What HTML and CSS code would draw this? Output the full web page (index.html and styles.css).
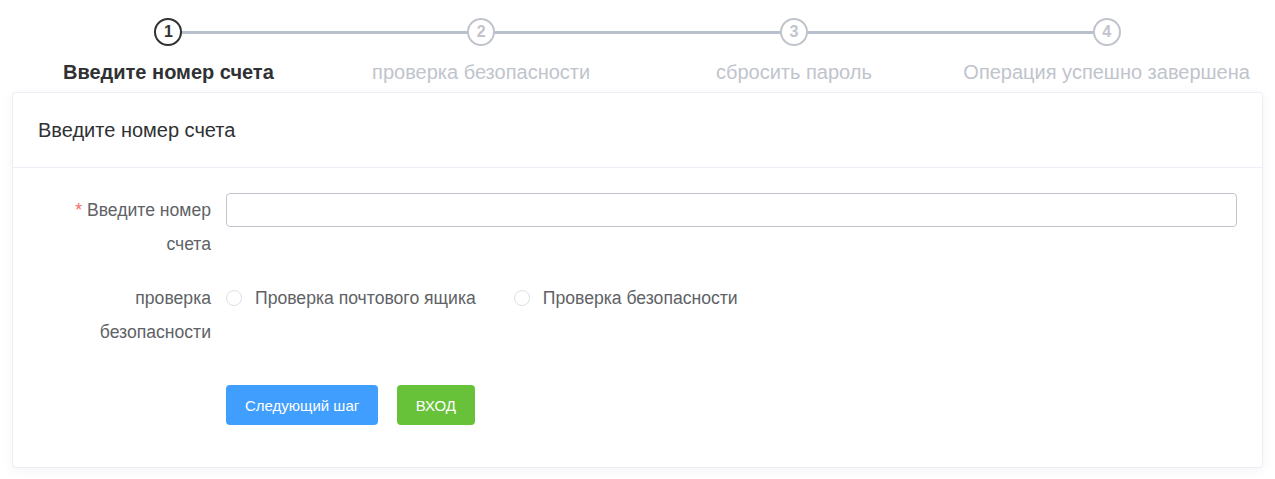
FILE: index.html
```html
<html lang="ru">
<head>
    <meta charset="UTF-8">
    <meta name="viewport" content="width=device-width, initial-scale=1.0">
    <title>Восстановление пароля</title>
    <link rel="stylesheet" href="styles.css">
</head>
<body>
    <div class="steps">
        <div class="step active">
            <div class="step-head">
                <div class="step-line"></div>
                <div class="step-icon">1</div>
            </div>
            <div class="step-title">Введите номер счета</div>
        </div>
        <div class="step">
            <div class="step-head">
                <div class="step-line"></div>
                <div class="step-icon">2</div>
            </div>
            <div class="step-title">проверка безопасности</div>
        </div>
        <div class="step">
            <div class="step-head">
                <div class="step-line"></div>
                <div class="step-icon">3</div>
            </div>
            <div class="step-title">сбросить пароль</div>
        </div>
        <div class="step last">
            <div class="step-head">
                <div class="step-icon">4</div>
            </div>
            <div class="step-title">Операция успешно завершена</div>
        </div>
    </div>

    <div class="card">
        <div class="card-header">Введите номер счета</div>
        <div class="card-body">
            <div class="form-item">
                <label class="form-label"><span class="required">*</span> Введите номер счета</label>
                <div class="form-content">
                    <input type="text" class="form-input">
                </div>
            </div>
            <div class="form-item">
                <label class="form-label">проверка безопасности</label>
                <div class="form-content radios">
                    <label class="radio"><span class="radio-dot"></span>Проверка почтового ящика</label>
                    <label class="radio"><span class="radio-dot"></span>Проверка безопасности</label>
                </div>
            </div>
            <div class="form-item buttons">
                <div class="form-label"></div>
                <div class="form-content">
                    <button class="btn btn-primary">Следующий шаг</button>
                    <button class="btn btn-success">ВХОД</button>
                </div>
            </div>
        </div>
    </div>
</body>
</html>
```

FILE: styles.css
```css
body {
    margin: 0;
    padding: 0 12px;
    font-family: "Liberation Sans", Arial, sans-serif;
    background-color: #ffffff;
    color: #606266;
}

/* шаги */
.steps {
    display: flex;
    padding-top: 18px;
}

.step {
    flex: 1;
    text-align: center;
}

.step-head {
    position: relative;
    height: 28px;
}

.step-line {
    position: absolute;
    top: 13px;
    left: 50%;
    right: -50%;
    height: 3px;
    background-color: #b9c0cd;
}

.step-icon {
    position: relative;
    width: 24px;
    height: 24px;
    margin: 0 auto;
    border: 2px solid #c0c4cc;
    border-radius: 50%;
    background-color: #ffffff;
    color: #c0c4cc;
    font-size: 16px;
    font-weight: bold;
    line-height: 24px;
}

.step-title {
    margin-top: 8px;
    line-height: 36px;
    font-size: 20px;
    color: #c0c4cc;
}

.step.active .step-icon {
    border-color: #303133;
    color: #303133;
}

.step.active .step-title {
    color: #303133;
    font-weight: bold;
}

/* карточка */
.card {
    margin-top: 2px;
    border: 1px solid #ebeef5;
    border-radius: 4px;
    background-color: #ffffff;
    box-shadow: 0 2px 12px 0 rgba(0, 0, 0, 0.05);
}

.card-header {
    padding: 0 25px;
    line-height: 74px;
    font-size: 20px;
    color: #303133;
    border-bottom: 1px solid #ebeef5;
}

.card-body {
    padding: 25px 25px 42px 0;
}

.form-item {
    display: flex;
    margin-bottom: 20px;
}

.form-item.buttons {
    margin-top: 36px;
    margin-bottom: 0;
}

.form-label {
    flex: 0 0 213px;
    box-sizing: border-box;
    padding: 0 15px 0 50px;
    text-align: right;
    font-size: 17.6px;
    line-height: 34px;
    color: #606266;
}

.required {
    color: #f56c6c;
}

.form-content {
    flex: 1;
}

.form-input {
    display: block;
    width: 100%;
    height: 34px;
    box-sizing: border-box;
    border: 1px solid #c0c4cc;
    border-radius: 4px;
    padding: 0 15px;
    font-size: 16px;
    outline: none;
}

.radios {
    display: flex;
    align-items: center;
    height: 34px;
}

.radio {
    display: flex;
    align-items: center;
    margin-right: 38px;
    font-size: 17.6px;
    color: #606266;
}

.radio-dot {
    width: 14px;
    height: 14px;
    margin-right: 13px;
    border: 1px solid #dcdfe6;
    border-radius: 50%;
}

.btn {
    height: 40px;
    padding: 0 19px;
    margin-right: 14px;
    border: none;
    border-radius: 4px;
    color: #ffffff;
    font-family: "Liberation Sans", Arial, sans-serif;
    font-size: 15px;
    cursor: pointer;
}

.btn-primary {
    background-color: #409eff;
}

.btn-success {
    background-color: #67c23a;
}
```
